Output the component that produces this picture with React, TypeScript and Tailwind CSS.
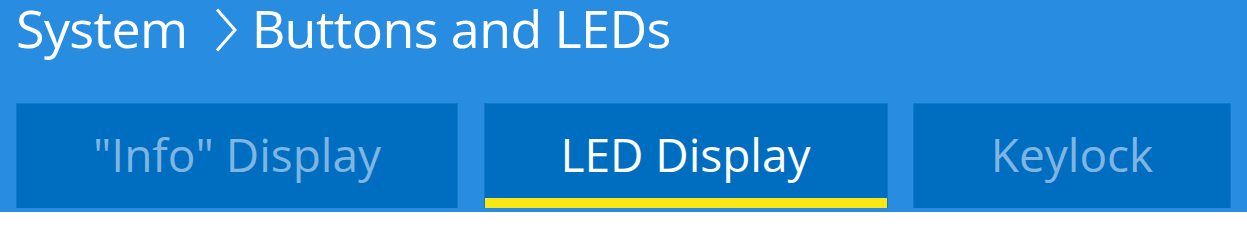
import React from "react";

const tabs = [
  { label: '"Info" Display', w: "w-[442px]", active: false },
  { label: "LED Display", w: "w-[404px]", active: true },
  { label: "Keylock", w: "w-[318px]", active: false },
];

export default function App() {
  return (
    <div
      className="w-[1247px] h-[212px] bg-[#288de0] overflow-hidden"
      style={{ fontFamily: '"Open Sans", "Noto Sans", sans-serif' }}
    >
      <div className="flex items-start h-[103px] pl-[16px]">
        <span className="text-[52px] leading-[56px] text-white tracking-[-0.6px]">System</span>
        <svg className="ml-[27px] mt-[8px] mr-[15px]" width="22" height="44" viewBox="0 0 22 44">
          <polyline points="2,1.5 20,22 2,42.5" fill="none" stroke="white" strokeWidth="3" strokeLinejoin="miter" />
        </svg>
        <span className="text-[52px] leading-[56px] text-white tracking-[-0.6px]">Buttons and LEDs</span>
      </div>
      <div className="flex gap-[25.5px] px-[16px]">
        {tabs.map((t) => (
          <div
            key={t.label}
            className={`${t.w} h-[105px] bg-[#006ec0] border border-b-0 border-[#1179c9] flex flex-col`}
          >
            <div
              className={`flex-1 flex items-center justify-center text-[46px] leading-[60px] pt-[5px] ${
                t.active ? "text-white" : "text-[#7fb5e0]"
              }`}
            >
              {t.label}
            </div>
            <div className={`h-[10px] ${t.active ? "bg-[#f7e816]" : ""}`} />
          </div>
        ))}
      </div>
    </div>
  );
}
